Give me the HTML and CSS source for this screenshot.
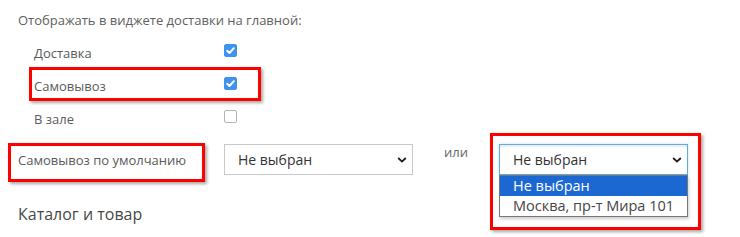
FILE: index.html
```html
<!DOCTYPE html>
<html lang="ru">
<head>
<meta charset="utf-8">
<link rel="stylesheet" href="styles.css">
</head>
<body>
<div class="page">
  <div class="heading">Отображать в виджете доставки на главной:</div>
  <div class="checks">
    <div class="check-row">
      <span class="check-label">Доставка</span>
      <span class="box is-checked"><svg viewBox="0 0 13 13" width="13" height="13"><polyline points="3.2,6.8 5.5,9 9.8,4.2" fill="none" stroke="#fff" stroke-width="2" stroke-linecap="round" stroke-linejoin="round"/></svg></span>
    </div>
    <div class="check-row">
      <span class="check-label">Самовывоз</span>
      <span class="box is-checked"><svg viewBox="0 0 13 13" width="13" height="13"><polyline points="3.2,6.8 5.5,9 9.8,4.2" fill="none" stroke="#fff" stroke-width="2" stroke-linecap="round" stroke-linejoin="round"/></svg></span>
    </div>
    <div class="check-row">
      <span class="check-label">В зале</span>
      <span class="box"></span>
    </div>
  </div>
  <div class="default-row">
    <span class="default-label">Самовывоз по умолчанию</span>
    <div class="select">
      <span class="select-text">Не выбран</span>
      <svg class="chev" viewBox="0 0 10 6" width="10" height="6"><polyline points="1.2,1 5,4.6 8.8,1" fill="none" stroke="#1a1a1a" stroke-width="1.8"/></svg>
    </div>
    <span class="or">или</span>
    <div class="select-wrap">
      <div class="select is-focused">
        <span class="select-text">Не выбран</span>
        <svg class="chev" viewBox="0 0 10 6" width="10" height="6"><polyline points="1.2,1 5,4.6 8.8,1" fill="none" stroke="#1a1a1a" stroke-width="1.8"/></svg>
      </div>
      <ul class="options">
        <li class="option is-active">Не выбран</li>
        <li class="option">Москва, пр-т Мира 101</li>
      </ul>
    </div>
  </div>
  <div class="section-title">Каталог и товар</div>

  <span class="mark mark-pickup"></span>
  <span class="mark mark-default"></span>
  <span class="mark mark-list"></span>
</div>
</body>
</html>
```

FILE: styles.css
```css
html, body {
  margin: 0;
  padding: 0;
  background: #fff;
}

body {
  font-family: "Open Sans", "Liberation Sans", sans-serif;
  color: #555;
  font-size: 13px;
  line-height: 18px;
}

.page {
  position: relative;
  padding: 11px 0 0 18px;
  height: 226px;
  overflow: hidden;
}

.heading {
  color: #606060;
}

.checks {
  margin-top: 14px;
  padding-left: 16px;
}

.check-row {
  display: flex;
  align-items: flex-start;
  height: 33px;
}

.check-label {
  width: 190px;
  padding-top: 1px;
  color: #5a5a5a;
}

.box {
  display: block;
  box-sizing: border-box;
  width: 13px;
  height: 13px;
  margin-top: 1px;
  border: 1px solid #b5b5b5;
  border-radius: 2px;
  background: #fff;
}

.box svg {
  display: block;
  margin: -1px;
}

.box.is-checked {
  border-color: #3e93ee;
  background: #3e93ee;
}

.default-row {
  display: flex;
  align-items: flex-start;
  margin-top: 2px;
}

.default-label {
  width: 206px;
  padding-top: 7px;
  color: #5a5a5a;
}

.select {
  box-sizing: border-box;
  width: 189px;
  height: 31px;
  border: 1px solid #c8c8c8;
  background: #fff;
  display: flex;
  align-items: center;
  justify-content: space-between;
  padding: 0 5px 0 13px;
  font-size: 14px;
  color: #333;
}

.select-text {
  padding-top: 1px;
}

.select.is-focused {
  border-color: #5ea9e6;
  box-shadow: inset 0 2px 2px rgba(0, 0, 0, 0.08), 0 0 3px rgba(102, 175, 233, 0.35);
}

.chev {
  display: block;
  margin-top: 1px;
}

.or {
  width: 55px;
  padding-left: 31px;
  margin-top: -1px;
  color: #666;
}

.select-wrap {
  position: relative;
}

.options {
  position: absolute;
  left: 0;
  top: 31px;
  width: 189px;
  box-sizing: border-box;
  margin: 0;
  padding: 0;
  list-style: none;
  background: #fff;
  border: 1px solid #767676;
  box-shadow: 1px 2px 3px rgba(0, 0, 0, 0.2);
  font-size: 14.5px;
  line-height: 20px;
  color: #444;
}

.option {
  height: 20px;
  padding-left: 13px;
}

.option.is-active {
  background: #1c68d3;
  color: #fff;
}

.section-title {
  margin-top: 28px;
  font-size: 16px;
  line-height: 22px;
  color: #474747;
}

.mark {
  position: absolute;
  box-sizing: border-box;
  border: 3px solid #f00;
  box-shadow: 2px 2px 3px rgba(0, 0, 0, 0.35);
  pointer-events: none;
}

.mark-pickup {
  left: 29px;
  top: 67px;
  width: 232px;
  height: 34px;
}

.mark-default {
  left: 8px;
  top: 143px;
  width: 197px;
  height: 39px;
}

.mark-list {
  left: 490px;
  top: 133px;
  width: 211px;
  height: 97px;
}
```
